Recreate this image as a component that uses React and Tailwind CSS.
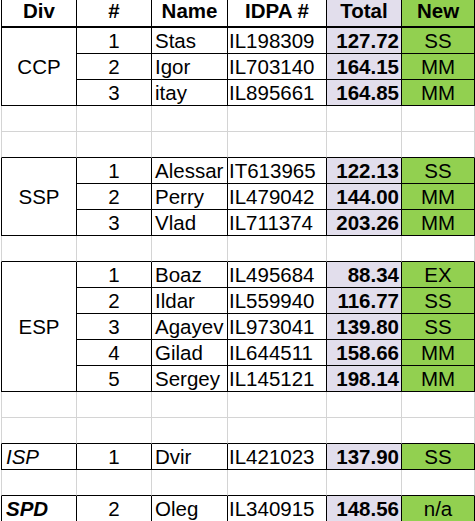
const blocks = [
  {
    div: 'CCP', divStyle: 'normal',
    rows: [
      [1, 'Stas', 'IL198309', '127.72', 'SS'],
      [2, 'Igor', 'IL703140', '164.15', 'MM'],
      [3, 'itay', 'IL895661', '164.85', 'MM'],
    ],
    gapAfter: 2,
  },
  {
    div: 'SSP', divStyle: 'normal',
    rows: [
      [1, 'Alessar', 'IT613965', '122.13', 'SS'],
      [2, 'Perry', 'IL479042', '144.00', 'MM'],
      [3, 'Vlad', 'IL711374', '203.26', 'MM'],
    ],
    gapAfter: 1,
  },
  {
    div: 'ESP', divStyle: 'normal',
    rows: [
      [1, 'Boaz', 'IL495684', '88.34', 'EX'],
      [2, 'Ildar', 'IL559940', '116.77', 'SS'],
      [3, 'Agayev', 'IL973041', '139.80', 'SS'],
      [4, 'Gilad', 'IL644511', '158.66', 'MM'],
      [5, 'Sergey', 'IL145121', '198.14', 'MM'],
    ],
    gapAfter: 2,
  },
  {
    div: 'ISP', divStyle: 'italic',
    rows: [[1, 'Dvir', 'IL421023', '137.90', 'SS']],
    gapAfter: 1,
  },
  {
    div: 'SPD', divStyle: 'bolditalic',
    rows: [[2, 'Oleg', 'IL340915', '148.56', 'n/a']],
    gapAfter: 0,
  },
];

const spans = { 1: 'row-span-1', 3: 'row-span-3', 5: 'row-span-5' };

const cellBase = 'h-[26px] flex items-center overflow-hidden whitespace-nowrap leading-[25px] border-r border-b';

function Header() {
  const th = 'h-[28px] flex items-start justify-center leading-[22px] font-bold border-r border-b-2 border-r-black border-b-black';
  return (
    <>
      <div className={`${th} border-l border-l-black`}>Div</div>
      <div className={th}>#</div>
      <div className={th}>Name</div>
      <div className={th}>IDPA #</div>
      <div className={`${th} bg-[#e2deec]`}>Total</div>
      <div className={`${th} bg-[#92d050]`}>New</div>
    </>
  );
}

function EmptyRow({ last }) {
  const b = last ? 'border-b-black' : 'border-b-[#d4d4d4]';
  const c = `${cellBase} border-r-[#d4d4d4] ${b}`;
  return (
    <>
      <div className={`${c} border-l border-l-[#d4d4d4]`} />
      <div className={c} />
      <div className={c} />
      <div className={c} />
      <div className={c} />
      <div className={c} />
    </>
  );
}

function Block({ block }) {
  const c = `${cellBase} border-r-black border-b-black`;
  let divCls = 'justify-center';
  if (block.divStyle === 'italic') divCls = 'justify-start pl-[4px] italic';
  if (block.divStyle === 'bolditalic') divCls = 'justify-start pl-[4px] italic font-bold';
  return (
    <>
      <div className={`${spans[block.rows.length]} flex items-center overflow-hidden leading-[25px] border-l border-r border-b border-l-black border-r-black border-b-black ${divCls}`}>
        {block.div}
      </div>
      {block.rows.map((r) => (
        <Row key={r[2]} r={r} c={c} />
      ))}
    </>
  );
}

function Row({ r, c }) {
  return (
    <>
      <div className={`${c} justify-center`}>{r[0]}</div>
      <div className={`${c} pl-[3px]`}>{r[1]}</div>
      <div className={`${c} pl-px`}>{r[2]}</div>
      <div className={`${c} justify-end pr-[2px] font-bold bg-[#e2deec]`}>{r[3]}</div>
      <div className={`${c} justify-center bg-[#92d050]`}>{r[4]}</div>
    </>
  );
}

export default function App() {
  return (
    <div className="w-[475px] h-[521px] overflow-hidden bg-white pl-px text-black text-[20.5px]" style={{ fontFamily: '"Liberation Sans", Arial, sans-serif' }}>
      <div className="grid grid-cols-[76px_75px_76px_99px_75px_1fr]">
        <Header />
        {blocks.map((b) => (
          <Group key={b.div} block={b} />
        ))}
      </div>
    </div>
  );
}

function Group({ block }) {
  const gaps = Array.from({ length: block.gapAfter }, (_, i) => i);
  return (
    <>
      <Block block={block} />
      {gaps.map((i) => (
        <EmptyRow key={i} last={i === block.gapAfter - 1} />
      ))}
    </>
  );
}
